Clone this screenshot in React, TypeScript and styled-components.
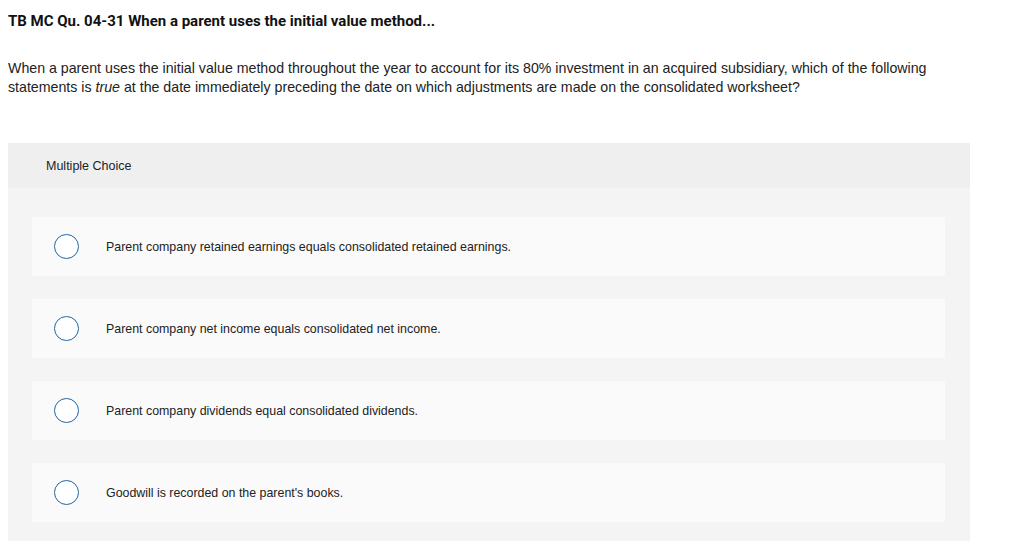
import React from 'react';
import styled, { createGlobalStyle } from 'styled-components';

const GlobalStyle = createGlobalStyle`
  body {
    margin: 0;
    background: #fff;
    font-family: "Liberation Sans", Arial, sans-serif;
    color: #222;
  }
`;

const Page = styled.div({
  padding: '0 8px',
  width: '962px',
});

const Title = styled.h2({
  fontFamily: 'Roboto, "Liberation Sans", sans-serif',
  fontSize: '15px',
  fontWeight: 'bold',
  margin: 0,
  paddingTop: '12px',
  lineHeight: '18px',
  color: '#111',
});

const Prompt = styled.p({
  fontSize: '14.2px',
  lineHeight: '19px',
  margin: '29px 0 0',
  color: '#222',
});

const Panel = styled.div({
  marginTop: '46px',
  background: '#f4f4f4',
  borderRadius: '2px',
  paddingBottom: '20px',
});

const PanelHeader = styled.div({
  background: '#efefef',
  height: '45px',
  display: 'flex',
  alignItems: 'center',
  paddingLeft: '38px',
  fontSize: '12.5px',
  color: '#222',
});

const Options = styled.div({
  display: 'flex',
  flexDirection: 'column',
  gap: '23px',
  padding: '29px 25px 0 24px',
});

const Option = styled.label({
  display: 'flex',
  alignItems: 'center',
  height: '59px',
  background: '#fafafa',
  paddingLeft: '22px',
  fontSize: '12.4px',
  color: '#222',
  cursor: 'pointer',
});

const Radio = styled.span({
  width: '23px',
  height: '23px',
  borderRadius: '50%',
  border: '1px solid #23649f',
  background: '#fff',
  marginRight: '27px',
  flexShrink: 0,
});

const choices = [
  'Parent company retained earnings equals consolidated retained earnings.',
  'Parent company net income equals consolidated net income.',
  'Parent company dividends equal consolidated dividends.',
  "Goodwill is recorded on the parent's books.",
];

export default function App() {
  return (
    <Page>
      <GlobalStyle />
      <Title>TB MC Qu. 04-31 When a parent uses the initial value method...</Title>
      <Prompt>
        When a parent uses the initial value method throughout the year to account for its 80% investment in an
        acquired subsidiary, which of the following statements is <em>true</em> at the date immediately preceding
        the date on which adjustments are made on the consolidated worksheet?
      </Prompt>
      <Panel>
        <PanelHeader>Multiple Choice</PanelHeader>
        <Options>
          {choices.map(c => (
            <Option key={c}>
              <Radio />
              {c}
            </Option>
          ))}
        </Options>
      </Panel>
    </Page>
  );
}
